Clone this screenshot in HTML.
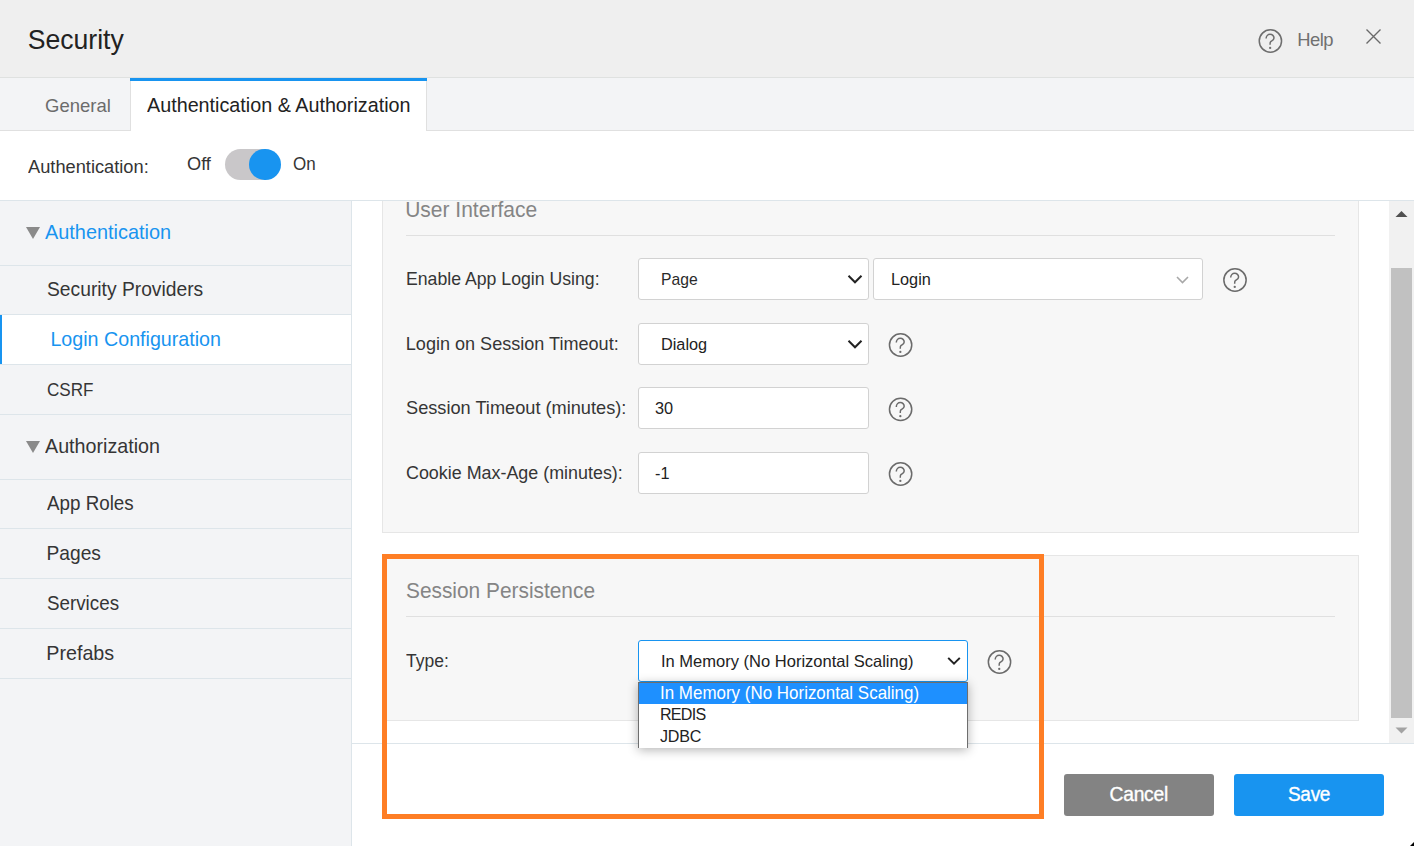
<!DOCTYPE html>
<html><head><meta charset="utf-8"><style>
html,body{margin:0;padding:0;width:1414px;height:846px;overflow:hidden;background:#fff;}
body{position:relative;font-family:"Liberation Sans", sans-serif;}
body>div,body>svg{position:absolute;}
.t{white-space:nowrap;}
</style></head><body>
<div style="left:0px;top:0px;width:1414px;height:77px;background:#efefef"></div>
<div style="left:0px;top:77px;width:1414px;height:1px;background:#dfe1e0"></div>
<div class="t" style="left:27.7px;top:23.80px;font-size:26.6px;line-height:32px;color:#222;transform:scaleY(1.035);transform-origin:0 25.00px;">Security</div>
<svg style="position:absolute;left:1256px;top:27px" width="28" height="28" viewBox="0 0 28 28"><g transform="translate(14.40 14.00)"><circle cx="0" cy="0" r="11.15" fill="none" stroke="#6e6e6e" stroke-width="1.5"/><path d="M-4.3 -2.4 C-4.3 -5.0 -2.4 -6.7 -0.3 -6.7 C1.9 -6.7 3.6 -5.1 3.6 -3.1 C3.6 -1.0 1.6 -0.3 0.3 0.6 C-0.3 1.1 -0.35 1.8 -0.35 3.7" fill="none" stroke="#6e6e6e" stroke-width="1.5"/><circle cx="-0.25" cy="6.9" r="1.15" fill="#6e6e6e"/></g></svg>
<div class="t" style="left:1297.3px;top:28.00px;font-size:18.4px;line-height:23px;color:#707070;transform:scaleY(1.035);transform-origin:0 18.00px;letter-spacing:-0.55px">Help</div>
<svg style="position:absolute;left:1364px;top:28px" width="18" height="18" viewBox="0 0 18 18"><path d="M2.5 1.5 L16.5 15.5 M16.5 1.5 L2.5 15.5" stroke="#6a6a6a" stroke-width="1.4"/></svg>
<div style="left:0px;top:78px;width:1414px;height:52px;background:#f3f4f6"></div>
<div style="left:0px;top:130px;width:1414px;height:1px;background:#e0e0e0"></div>
<div class="t" style="left:45px;top:94.00px;font-size:18.5px;line-height:23px;color:#6b6b6b;transform:scaleY(1.035);transform-origin:0 18.00px;">General</div>
<div style="left:130px;top:78px;width:297px;height:53px;background:#fff;border-left:1px solid #e0e0e0;border-right:1px solid #e0e0e0;box-sizing:border-box"></div>
<div style="left:130px;top:78px;width:297px;height:3px;background:#1894f0"></div>
<div class="t" style="left:147px;top:93.00px;font-size:19.75px;line-height:24px;color:#222;transform:scaleY(1.035);transform-origin:0 19.00px;">Authentication &amp; Authorization</div>
<div style="left:0px;top:131px;width:1414px;height:69px;background:#fff"></div>
<div class="t" style="left:28px;top:156.02px;font-size:18.25px;line-height:22px;color:#353535;transform:scaleY(1.035);transform-origin:0 16.98px;">Authentication:</div>
<div class="t" style="left:187px;top:153.21px;font-size:18.2px;line-height:22px;color:#353535;transform:scaleY(1.035);transform-origin:0 16.99px;">Off</div>
<div style="left:225px;top:149px;width:52px;height:31px;background:#c9c7c9;border-radius:16px"></div>
<div style="left:249.2px;top:148.8px;width:31.6px;height:31.4px;background:#1894f0;border-radius:50%"></div>
<div class="t" style="left:293px;top:154.21px;font-size:17px;line-height:21px;color:#353535;transform:scaleY(1.07);transform-origin:0 15.99px;">On</div>
<div style="left:0px;top:200px;width:1414px;height:1px;background:#dde5ea"></div>
<div style="left:0px;top:201px;width:351px;height:645px;background:#f3f4f6"></div>
<div style="left:351px;top:201px;width:1px;height:645px;background:#dde5ea"></div>
<svg style="position:absolute;left:26px;top:227px" width="15" height="13" viewBox="0 0 15 13"><path d="M0 0 L14 0 L7 12 Z" fill="#8a8a8a"/></svg>
<div class="t" style="left:45px;top:220.00px;font-size:19.9px;line-height:24px;color:#1894f0;transform:scaleY(1.035);transform-origin:0 19.00px;">Authentication</div>
<div style="left:0px;top:265px;width:351px;height:1px;background:#dde5ea"></div>
<div class="t" style="left:47px;top:278.24px;font-size:19.26px;line-height:24px;color:#353535;transform:scaleY(1.06);transform-origin:0 17.96px;">Security Providers</div>
<div style="left:0px;top:314px;width:351px;height:1px;background:#dde5ea"></div>
<div style="left:0px;top:315px;width:351px;height:49px;background:#fff"></div>
<div style="left:0px;top:315px;width:2px;height:49px;background:#1894f0"></div>
<div class="t" style="left:50.4px;top:326.50px;font-size:19.68px;line-height:24px;color:#1894f0;transform:scaleY(1.035);transform-origin:0 19.00px;">Login Configuration</div>
<div style="left:0px;top:364px;width:351px;height:1px;background:#dde5ea"></div>
<div class="t" style="left:47px;top:380.00px;font-size:17.1px;line-height:21px;color:#353535;transform:scaleY(1.11);transform-origin:0 16.00px;">CSRF</div>
<div style="left:0px;top:414px;width:351px;height:1px;background:#dde5ea"></div>
<svg style="position:absolute;left:26px;top:441px" width="15" height="13" viewBox="0 0 15 13"><path d="M0 0 L14 0 L7 12 Z" fill="#8a8a8a"/></svg>
<div class="t" style="left:45px;top:434.00px;font-size:19.7px;line-height:24px;color:#353535;transform:scaleY(1.035);transform-origin:0 19.00px;">Authorization</div>
<div style="left:0px;top:479px;width:351px;height:1px;background:#dde5ea"></div>
<div class="t" style="left:47px;top:492.00px;font-size:18.8px;line-height:23px;color:#353535;transform:scaleY(1.09);transform-origin:0 18.00px;">App Roles</div>
<div style="left:0px;top:528px;width:351px;height:1px;background:#dde5ea"></div>
<div class="t" style="left:46.5px;top:542.02px;font-size:19.2px;line-height:24px;color:#353535;transform:scaleY(1.035);transform-origin:0 17.98px;">Pages</div>
<div style="left:0px;top:578px;width:351px;height:1px;background:#dde5ea"></div>
<div class="t" style="left:47px;top:591.50px;font-size:18.8px;line-height:23px;color:#353535;transform:scaleY(1.035);transform-origin:0 18.00px;">Services</div>
<div style="left:0px;top:628px;width:351px;height:1px;background:#dde5ea"></div>
<div class="t" style="left:46.3px;top:640.50px;font-size:19.7px;line-height:24px;color:#353535;transform:scaleY(1.035);transform-origin:0 19.00px;">Prefabs</div>
<div style="left:0px;top:678px;width:351px;height:1px;background:#dde5ea"></div>
<div style="left:352px;top:201px;width:1062px;height:645px;background:#fff"></div>
<div style="left:382px;top:201px;width:977px;height:332px;background:#f7f7f7;border:1px solid #e6e6e6;border-top:none;box-sizing:border-box"></div>
<div class="t" style="left:405.2px;top:197.02px;font-size:21.0px;line-height:26px;color:#858585;transform:scaleY(1.035);transform-origin:0 19.98px;">User Interface</div>
<div style="left:406px;top:235px;width:929px;height:1px;background:#e0e0e0"></div>
<div class="t" style="left:406px;top:268.11px;font-size:17.68px;line-height:22px;color:#353535;transform:scaleY(1.035);transform-origin:0 16.99px;">Enable App Login Using:</div>
<div style="left:638px;top:258px;width:231px;height:42px;background:#fff;border:1px solid #d2d2d2;border-radius:3px;box-sizing:border-box"></div>
<div class="t" style="left:661px;top:269.80px;font-size:15.7px;line-height:19px;color:#2a2a2a;transform:scaleY(1.07);transform-origin:0 15.00px;">Page</div>
<svg style="position:absolute;left:845px;top:272px" width="21" height="15" viewBox="0 0 21 15"><path d="M3.50 3.80 L10.00 10.30 L16.50 3.80" fill="none" stroke="#222" stroke-width="2.0"/></svg>
<div style="left:873px;top:258px;width:330px;height:42px;background:#fff;border:1px solid #d2d2d2;border-radius:3px;box-sizing:border-box"></div>
<div class="t" style="left:891px;top:268.80px;font-size:16.3px;line-height:20px;color:#222;transform:scaleY(1.035);transform-origin:0 16.00px;">Login</div>
<svg style="position:absolute;left:1174px;top:274px" width="18" height="13" viewBox="0 0 18 13"><path d="M3.00 3.00 L8.50 8.50 L14.00 3.00" fill="none" stroke="#a8a8a8" stroke-width="1.6"/></svg>
<svg style="position:absolute;left:1221px;top:266px" width="28" height="28" viewBox="0 0 28 28"><g transform="translate(14.00 14.00)"><circle cx="0" cy="0" r="11.15" fill="none" stroke="#6b6b6b" stroke-width="1.5"/><path d="M-4.3 -2.4 C-4.3 -5.0 -2.4 -6.7 -0.3 -6.7 C1.9 -6.7 3.6 -5.1 3.6 -3.1 C3.6 -1.0 1.6 -0.3 0.3 0.6 C-0.3 1.1 -0.35 1.8 -0.35 3.7" fill="none" stroke="#6b6b6b" stroke-width="1.5"/><circle cx="-0.25" cy="6.9" r="1.15" fill="#6b6b6b"/></g></svg>
<div class="t" style="left:405.8px;top:332.61px;font-size:18.07px;line-height:22px;color:#353535;transform:scaleY(1.035);transform-origin:0 16.99px;">Login on Session Timeout:</div>
<div style="left:638px;top:323px;width:231px;height:42px;background:#fff;border:1px solid #d2d2d2;border-radius:3px;box-sizing:border-box"></div>
<div class="t" style="left:661px;top:333.80px;font-size:16.3px;line-height:20px;color:#222;transform:scaleY(1.035);transform-origin:0 16.00px;">Dialog</div>
<svg style="position:absolute;left:845px;top:337px" width="21" height="15" viewBox="0 0 21 15"><path d="M3.50 3.80 L10.00 10.30 L16.50 3.80" fill="none" stroke="#222" stroke-width="2.0"/></svg>
<svg style="position:absolute;left:886px;top:331px" width="28" height="28" viewBox="0 0 28 28"><g transform="translate(14.60 14.00)"><circle cx="0" cy="0" r="11.15" fill="none" stroke="#6b6b6b" stroke-width="1.5"/><path d="M-4.3 -2.4 C-4.3 -5.0 -2.4 -6.7 -0.3 -6.7 C1.9 -6.7 3.6 -5.1 3.6 -3.1 C3.6 -1.0 1.6 -0.3 0.3 0.6 C-0.3 1.1 -0.35 1.8 -0.35 3.7" fill="none" stroke="#6b6b6b" stroke-width="1.5"/><circle cx="-0.25" cy="6.9" r="1.15" fill="#6b6b6b"/></g></svg>
<div class="t" style="left:406px;top:396.80px;font-size:18.2px;line-height:22px;color:#353535;transform:scaleY(1.035);transform-origin:0 17.00px;">Session Timeout (minutes):</div>
<div style="left:638px;top:387px;width:231px;height:42px;background:#fff;border:1px solid #d2d2d2;border-radius:3px;box-sizing:border-box"></div>
<div class="t" style="left:655px;top:397.80px;font-size:16.3px;line-height:20px;color:#222;transform:scaleY(1.035);transform-origin:0 16.00px;">30</div>
<svg style="position:absolute;left:886px;top:395px" width="28" height="28" viewBox="0 0 28 28"><g transform="translate(14.60 14.30)"><circle cx="0" cy="0" r="11.15" fill="none" stroke="#6b6b6b" stroke-width="1.5"/><path d="M-4.3 -2.4 C-4.3 -5.0 -2.4 -6.7 -0.3 -6.7 C1.9 -6.7 3.6 -5.1 3.6 -3.1 C3.6 -1.0 1.6 -0.3 0.3 0.6 C-0.3 1.1 -0.35 1.8 -0.35 3.7" fill="none" stroke="#6b6b6b" stroke-width="1.5"/><circle cx="-0.25" cy="6.9" r="1.15" fill="#6b6b6b"/></g></svg>
<div class="t" style="left:406px;top:462.00px;font-size:17.9px;line-height:22px;color:#353535;transform:scaleY(1.035);transform-origin:0 17.00px;">Cookie Max-Age (minutes):</div>
<div style="left:638px;top:452px;width:231px;height:42px;background:#fff;border:1px solid #d2d2d2;border-radius:3px;box-sizing:border-box"></div>
<div class="t" style="left:655px;top:463.11px;font-size:16.3px;line-height:20px;color:#222;transform:scaleY(1.035);transform-origin:0 15.99px;">-1</div>
<svg style="position:absolute;left:886px;top:460px" width="28" height="28" viewBox="0 0 28 28"><g transform="translate(14.60 14.00)"><circle cx="0" cy="0" r="11.15" fill="none" stroke="#6b6b6b" stroke-width="1.5"/><path d="M-4.3 -2.4 C-4.3 -5.0 -2.4 -6.7 -0.3 -6.7 C1.9 -6.7 3.6 -5.1 3.6 -3.1 C3.6 -1.0 1.6 -0.3 0.3 0.6 C-0.3 1.1 -0.35 1.8 -0.35 3.7" fill="none" stroke="#6b6b6b" stroke-width="1.5"/><circle cx="-0.25" cy="6.9" r="1.15" fill="#6b6b6b"/></g></svg>
<div style="left:382px;top:555px;width:977px;height:166px;background:#f7f7f7;border:1px solid #e6e6e6;box-sizing:border-box"></div>
<div class="t" style="left:406px;top:578.02px;font-size:20.87px;line-height:26px;color:#858585;transform:scaleY(1.035);transform-origin:0 19.98px;">Session Persistence</div>
<div style="left:406px;top:616px;width:929px;height:1px;background:#e0e0e0"></div>
<div class="t" style="left:406px;top:651.02px;font-size:17.5px;line-height:21px;color:#353535;transform:scaleY(1.035);transform-origin:0 15.98px;">Type:</div>
<div style="left:638px;top:640px;width:330px;height:42px;background:#fff;border:1px solid #1894f0;border-radius:3px;box-sizing:border-box"></div>
<div class="t" style="left:661px;top:652.02px;font-size:16.53px;line-height:20px;color:#222;transform:scaleY(1.035);transform-origin:0 14.98px;">In Memory (No Horizontal Scaling)</div>
<svg style="position:absolute;left:945px;top:654px" width="19" height="14" viewBox="0 0 19 14"><path d="M3.20 3.90 L9.00 9.70 L14.80 3.90" fill="none" stroke="#222" stroke-width="2.0"/></svg>
<svg style="position:absolute;left:985px;top:648px" width="28" height="28" viewBox="0 0 28 28"><g transform="translate(14.50 14.00)"><circle cx="0" cy="0" r="11.15" fill="none" stroke="#6b6b6b" stroke-width="1.5"/><path d="M-4.3 -2.4 C-4.3 -5.0 -2.4 -6.7 -0.3 -6.7 C1.9 -6.7 3.6 -5.1 3.6 -3.1 C3.6 -1.0 1.6 -0.3 0.3 0.6 C-0.3 1.1 -0.35 1.8 -0.35 3.7" fill="none" stroke="#6b6b6b" stroke-width="1.5"/><circle cx="-0.25" cy="6.9" r="1.15" fill="#6b6b6b"/></g></svg>
<div style="left:1389px;top:201px;width:25px;height:542px;background:#f1f1f1"></div>
<div style="left:1391px;top:268px;width:21px;height:450px;background:#c1c1c1"></div>
<svg style="position:absolute;left:1395px;top:210px" width="13" height="8" viewBox="0 0 13 8"><path d="M0.5 7 L6.5 1 L12.5 7 Z" fill="#505050"/></svg>
<svg style="position:absolute;left:1395px;top:727px" width="13" height="8" viewBox="0 0 13 8"><path d="M0.5 0.5 L6.5 6.5 L12.5 0.5 Z" fill="#a3a3a3"/></svg>
<div style="left:352px;top:743px;width:1062px;height:1px;background:#dde5ea"></div>
<div style="left:1064px;top:774px;width:150px;height:42px;background:#838383;border-radius:3px"></div>
<div class="t" style="left:1109.5px;top:783.02px;font-size:19.3px;line-height:24px;color:#fff;transform:scaleY(1.035);transform-origin:0 17.98px;letter-spacing:-0.25px;-webkit-text-stroke:0.35px #fff">Cancel</div>
<div style="left:1234px;top:774px;width:150px;height:42px;background:#1894f0;border-radius:3px"></div>
<div class="t" style="left:1288px;top:783.00px;font-size:19px;line-height:23px;color:#fff;transform:scaleY(1.035);transform-origin:0 18.00px;letter-spacing:-0.3px;-webkit-text-stroke:0.35px #fff">Save</div>
<div style="left:382px;top:554px;width:662px;height:265px;border:5px solid #fe7e25;box-sizing:border-box"></div>
<div style="left:638px;top:682px;width:330px;height:66px;background:#fff;border:1px solid #6e6e6e;border-bottom:none;box-sizing:border-box;box-shadow:0 2px 10px rgba(0,0,0,0.3)"></div>
<div style="left:639px;top:683px;width:328px;height:21px;background:#1e90ff"></div>
<div class="t" style="left:660px;top:683.30px;font-size:16.97px;line-height:21px;color:#fff;transform:scaleY(1.035);transform-origin:0 16.00px;">In Memory (No Horizontal Scaling)</div>
<div class="t" style="left:660px;top:704.00px;font-size:16.1px;line-height:20px;color:#222;transform:scaleY(1.035);transform-origin:0 16.00px;letter-spacing:-0.75px">REDIS</div>
<div class="t" style="left:660px;top:725.50px;font-size:16.1px;line-height:20px;color:#222;transform:scaleY(1.035);transform-origin:0 16.00px;letter-spacing:-0.25px">JDBC</div>
<svg style="position:absolute;left:1408px;top:840px" width="6" height="6" viewBox="0 0 6 6"><path d="M6 2 L6 6 L2 6 Z" fill="#000"/></svg>
</body></html>
